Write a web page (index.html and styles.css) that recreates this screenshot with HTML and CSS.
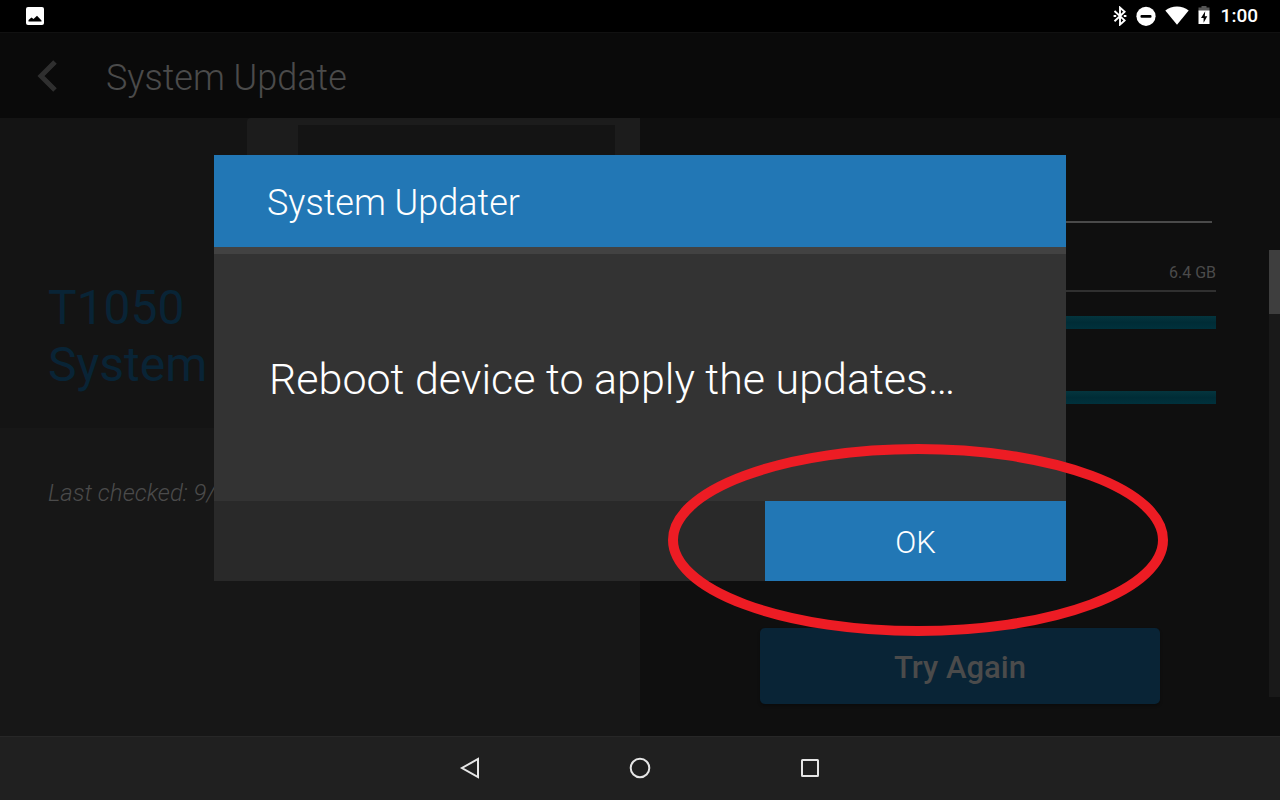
FILE: index.html
```html
<!DOCTYPE html>
<html lang="en">
<head>
    <meta charset="UTF-8">
    <meta name="viewport" content="width=device-width, initial-scale=1.0">
    <title>System Update</title>
    <link rel="stylesheet" href="styles.css">
</head>
<body>

    <div class="screen">
        <header class="status-bar">
            <svg class="icon-picture" width="18" height="18" viewBox="0 0 18 18">
                <rect width="18" height="18" rx="2" fill="#fff"/>
                <path d="M2.5 14.5 V13 L5.5 10.5 L7.5 12 L11 8.8 L15.5 13.5 V14.5 Z" fill="#000"/>
            </svg>
            <div class="status-icons">
                <svg width="14" height="20" viewBox="0 0 14 20" fill="none" stroke="#fff" stroke-width="1.9">
                    <path d="M1.5 5 L11.6 14.4 L7 18.6 V1.6 L11.6 5.8 L1.5 15.2"/>
                    <path d="M0.6 10.1 h2.6 M10.8 10.1 h2.6" stroke-width="2"/>
                </svg>
                <svg width="20" height="20" viewBox="0 0 20 20">
                    <circle cx="10" cy="10.3" r="9.6" fill="#fff"/>
                    <rect x="4.5" y="8.9" width="11" height="2.8" rx="1" fill="#000"/>
                </svg>
                <svg width="24" height="20" viewBox="0 0 24 20">
                    <path d="M0.3 4.6 C7 -0.8 17 -0.8 23.7 4.6 L12 18.8 Z" fill="#fff"/>
                </svg>
                <svg class="icon-battery" width="12" height="20" viewBox="0 0 12 20">
                    <path d="M3.5 -0.5 h5 v2 h3 v4 h-11 v-4 h3 z" fill="#555"/>
                    <path d="M0.5 4.5 h11 v13.5 h-11 z" fill="#fff"/>
                    <path d="M7.2 5.3 L3 12 h2.6 v4.8 L9.3 10.2 H6.8 Z" fill="#000"/>
                </svg>
                <span class="clock">1:00</span>
            </div>
        </header>

        <div class="app-bar">
            <button class="back" type="button" aria-label="Back">
                <svg width="22" height="32" viewBox="0 0 22 32" fill="none" stroke="#2f2f2f" stroke-width="5">
                    <path d="M19 2 L5 16 L19 30"/>
                </svg>
            </button>
            <h1>System Update</h1>
        </div>

        <main class="content">
            <section class="device">
                <div class="hero">
                    <div class="tablet"></div>
                    <h2>T1050<br>System</h2>
                </div>
                <p class="last-checked">Last checked: 9/</p>
            </section>

            <section class="storage">
                <hr class="rule">
                <p class="size">6.4 GB</p>
                <div class="bar"></div>
                <div class="bar"></div>
                <button class="try-again" type="button">Try Again</button>
                <div class="scroll-track"><div class="scroll-thumb"></div></div>
            </section>
        </main>

        <nav class="nav-bar">
            <button type="button" aria-label="Back">
                <svg width="24" height="24" viewBox="0 0 24 24">
                    <path d="M20 3 V21 L4 12 Z"/>
                </svg>
            </button>
            <button type="button" aria-label="Home">
                <svg width="24" height="24" viewBox="0 0 24 24">
                    <circle cx="12" cy="12" r="9.3"/>
                </svg>
            </button>
            <button type="button" aria-label="Recent apps">
                <svg width="24" height="24" viewBox="0 0 24 24">
                    <rect x="4" y="4" width="16" height="16" rx="0.5"/>
                </svg>
            </button>
        </nav>

        <div class="overlay">
            <div class="dialog" role="dialog" aria-labelledby="dialog-title">
                <h2 class="dialog-title" id="dialog-title">System Updater</h2>
                <p class="dialog-text">Reboot device to apply the updates…</p>
                <div class="dialog-actions">
                    <button class="ok" type="button">OK</button>
                    <!-- callout ring around the OK button -->
                    <svg class="ring" width="500" height="192" viewBox="0 0 500 192">
                        <ellipse cx="250" cy="96" rx="245" ry="91" fill="none" stroke="#ed1c24" stroke-width="10"/>
                    </svg>
                </div>
            </div>
        </div>
    </div>

</body>
</html>
```
FILE: styles.css
```css
* {
    box-sizing: border-box;
}

body {
    margin: 0;
    background-color: #000;
    color: #4b4b4b;
    font-family: Roboto, "Liberation Sans", sans-serif;
}

h1, h2, p {
    margin: 0;
    font-weight: 300;
}

button {
    border: none;
    padding: 0;
    background: none;
    font-family: inherit;
    cursor: pointer;
}

svg {
    display: block;
}

.screen {
    position: relative;
    display: flex;
    flex-direction: column;
    min-height: 100vh;
}

/* Status bar */
.status-bar {
    display: flex;
    align-items: center;
    justify-content: space-between;
    height: 32px;
    padding: 0 22px 0 26px;
}

.status-icons {
    display: flex;
    align-items: center;
    gap: 9px;
}

.clock {
    padding-left: 2px;
    color: #fff;
    font-size: 19px;
    font-weight: 500;
    line-height: 32px;
}

/* App bar */
.app-bar {
    display: flex;
    align-items: center;
    gap: 48px;
    height: 86px;
    padding: 0 36px;
    background-color: #0a0a0a;
    border-top: 1px solid #111;
}

.app-bar h1 {
    font-size: 36px;
    line-height: 44px;
    padding-top: 4px;
}

/* Content */
.content {
    display: flex;
    flex: 1;
}

.device {
    width: 50%;
    background-color: #171717;
}

.hero {
    position: relative;
    display: flex;
    align-items: flex-end;
    height: 310px;
    padding: 0 48px 35px;
    background-color: #141414;
}

.hero h2 {
    position: relative;
    color: #092436;
    font-size: 48px;
    font-weight: 400;
    line-height: 57px;
}

.tablet {
    position: absolute;
    top: 0;
    right: 0;
    width: 393px;
    height: 240px;
    background-color: #141414;
    border: solid #1c1c1c;
    border-width: 7px 25px 25px 51px;
    border-radius: 4px 0 0 4px;
}

.last-checked {
    padding: 51px 48px 0;
    font-size: 24px;
    font-style: italic;
    line-height: 28px;
    white-space: nowrap;
}

.storage {
    position: relative;
    display: flex;
    flex-direction: column;
    width: 50%;
    padding: 103px 64px 32px;
    background-color: #0f0f0f;
}

.rule {
    width: auto;
    height: 2px;
    margin: 0 4px 40px 0;
    border: none;
    background-color: #4a4a4a;
}

.size {
    padding-bottom: 7px;
    border-bottom: 2px solid #303030;
    font-size: 16px;
    font-weight: 400;
    line-height: 20px;
    text-align: right;
}

.bar {
    height: 13px;
    margin-top: 24px;
    background: linear-gradient(#04353e, #002c36 50%, #00313c);
}

.bar + .bar {
    margin-top: 62px;
}

.try-again {
    align-self: center;
    width: 400px;
    height: 76px;
    margin-top: auto;
    padding-top: 2px;
    border-radius: 5px;
    background-color: #092436;
    box-shadow: 0 2px 3px rgba(0, 0, 0, 0.3);
    color: #4b4b4b;
    font-size: 31px;
    font-weight: 500;
}

.scroll-track {
    position: absolute;
    top: 132px;
    right: 0;
    bottom: 39px;
    width: 11px;
    background-color: #191919;
}

.scroll-thumb {
    height: 64px;
    background-color: #3e3e3e;
}

/* Navigation bar */
.nav-bar {
    display: flex;
    justify-content: center;
    height: 64px;
    background-color: #202020;
    box-shadow: inset 0 1px #272727;
}

.nav-bar button {
    display: grid;
    place-items: center;
    width: 170px;
}

.nav-bar svg {
    fill: none;
    stroke: #e6e6e6;
    stroke-width: 2;
}

/* Dialog */
.overlay {
    position: absolute;
    inset: 0 0 64px;
    display: grid;
    place-items: center;
}

.dialog {
    width: 852px;
    max-width: 90%;
    background-color: #333;
    color: #fff;
}

.dialog-title {
    padding: 26px 53px 22px;
    background-color: #2277b5;
    font-size: 36px;
    line-height: 44px;
}

.dialog-text {
    padding: 101px 55px 98px;
    border-top: 7px solid #424242;
    font-size: 43px;
    line-height: 48px;
}

.dialog-actions {
    position: relative;
    display: flex;
    justify-content: flex-end;
    background-color: #292929;
}

.ok {
    width: 301px;
    height: 80px;
    padding-top: 2px;
    background-color: #2277b5;
    color: #fff;
    font-size: 31px;
    font-weight: 300;
}

.ring {
    position: absolute;
    top: -57px;
    right: -102px;
    pointer-events: none;
}
```
